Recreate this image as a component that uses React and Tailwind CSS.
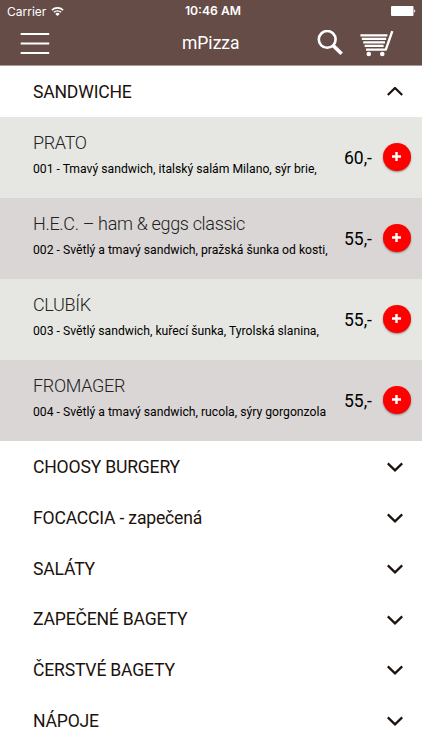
import React from "react";

const sandwiches = [
  {
    name: "PRATO",
    desc: "001 - Tmavý sandwich, italský salám Milano, sýr brie,",
    price: "60,-",
  },
  {
    name: "H.E.C. – ham & eggs classic",
    desc: "002 - Světlý a tmavý sandwich, pražská šunka od kosti,",
    price: "55,-",
  },
  {
    name: "CLUBÍK",
    desc: "003 - Světlý sandwich, kuřecí šunka, Tyrolská slanina,",
    price: "55,-",
  },
  {
    name: "FROMAGER",
    desc: "004 - Světlý a tmavý sandwich, rucola, sýry gorgonzola",
    price: "55,-",
  },
];

const categories = [
  "CHOOSY BURGERY",
  "FOCACCIA - zapečená",
  "SALÁTY",
  "ZAPEČENÉ BAGETY",
  "ČERSTVÉ BAGETY",
  "NÁPOJE",
];

function WifiIcon() {
  return (
    <svg width="13" height="10" viewBox="0 0 13 10" fill="none" stroke="white">
      <path d="M0.9 3.1a8.2 8.2 0 0 1 11.2 0" strokeWidth="1.6" />
      <path d="M2.9 5.3a5.3 5.3 0 0 1 7.2 0" strokeWidth="1.5" />
      <path d="M6.5 9L4.3 6.9a3.1 3.1 0 0 1 4.4 0z" fill="white" stroke="none" />
    </svg>
  );
}

function BatteryIcon() {
  return (
    <svg width="25" height="10" viewBox="0 0 25 10" fill="white">
      <rect width="22.5" height="10" rx="1" />
      <path d="M23.2 3.4c1.4.4 1.4 2.8 0 3.2z" />
    </svg>
  );
}

function MenuIcon() {
  return (
    <svg width="30" height="24" viewBox="0 0 30 24" stroke="white">
      <path d="M0.7 2h28.5M0.7 11.5h28.5M0.7 21h28.5" strokeWidth="2.2" />
    </svg>
  );
}

function SearchIcon() {
  return (
    <svg width="27" height="28" viewBox="0 0 27 28" fill="none" stroke="white">
      <circle cx="10.2" cy="9.4" r="8.4" strokeWidth="2.6" />
      <path d="M16 15.4l8.6 8.4" strokeWidth="3.6" />
    </svg>
  );
}

function CartIcon() {
  return (
    <svg width="34" height="28" viewBox="0 0 34 28" fill="none" stroke="white">
      <path d="M0.4 5.4h27M1.8 8.9h24.4M3.2 12.4h21.8M4.6 15.9h19" strokeWidth="2.4" />
      <path d="M32.3 1.2L25.8 19.6H6" strokeWidth="2.4" strokeLinejoin="round" />
      <circle cx="8.8" cy="24" r="2.3" fill="white" stroke="none" />
      <circle cx="22.3" cy="24" r="2.3" fill="white" stroke="none" />
    </svg>
  );
}

function Chevron({ open }) {
  return (
    <svg
      width="16"
      height="10"
      viewBox="0 0 16 10"
      fill="none"
      stroke="#1c120d"
      strokeWidth="2.2"
    >
      <path d={open ? "M0.8 8L8 1l7.2 7" : "M0.8 1.4L8 8.4l7.2-7"} />
    </svg>
  );
}

function CategoryRow({ title, open }) {
  return (
    <div className="flex h-[50.8px] items-center justify-between pt-0.5 pr-[19px] pl-[33px]">
      <span className="text-[17.6px] tracking-[-0.2px] text-[#1c120d]">
        {title}
      </span>
      <Chevron open={open} />
    </div>
  );
}

function ProductRow({ item }) {
  return (
    <div className="flex h-[81px] items-center bg-[#e6e7e2] pr-[11.5px] pb-px pl-[33px] even:bg-[#dad6d5]">
      <div className="w-[311px] pb-px whitespace-nowrap">
        <div className="text-[18px] leading-[26px] font-light tracking-[-0.33px] text-[#222]">
          {item.name}
        </div>
        <div className="text-[12.2px] leading-[26px] text-black">{item.desc}</div>
      </div>
      <span className="pt-0.5 text-[17.5px] text-black">{item.price}</span>
      <button className="ml-auto flex size-7 items-center justify-center rounded-full bg-[#fe0000] shadow-[0_1px_2px_rgba(0,0,0,0.4)]">
        <svg width="9" height="9" viewBox="0 0 9 9" stroke="white">
          <path d="M4.5 0v9M0 4.5h9" strokeWidth="2.4" />
        </svg>
      </button>
    </div>
  );
}

export default function App() {
  return (
    <div className="h-[750px] w-[422px] overflow-hidden bg-white font-['Roboto',sans-serif]">
      {/* Header */}
      <header className="h-[66px] border-b border-[#a99b98] bg-[#654c47] text-white">
        <div className="grid h-[22px] grid-cols-3 items-center pr-[6px] pl-[7px] font-['Inter',sans-serif] text-[12px]">
          <div className="flex items-center gap-[5px] pt-px">
            <span>Carrier</span>
            <WifiIcon />
          </div>
          <span className="pt-px pl-[3px] text-center text-[12.2px] font-semibold">
            10:46 AM
          </span>
          <div className="flex justify-end">
            <BatteryIcon />
          </div>
        </div>
        <div className="grid h-[43px] grid-cols-[1fr_auto_1fr] items-center pr-[28.5px] pl-5">
          <MenuIcon />
          <h1 className="pl-2 text-center text-[17.5px]">mPizza</h1>
          <div className="flex justify-end gap-4">
            <SearchIcon />
            <CartIcon />
          </div>
        </div>
      </header>

      {/* Open category */}
      <CategoryRow title="SANDWICHE" open />
      <div>
        {sandwiches.map((item) => (
          <ProductRow key={item.name} item={item} />
        ))}
      </div>

      {/* Collapsed categories */}
      {categories.map((title) => (
        <CategoryRow key={title} title={title} />
      ))}
    </div>
  );
}
